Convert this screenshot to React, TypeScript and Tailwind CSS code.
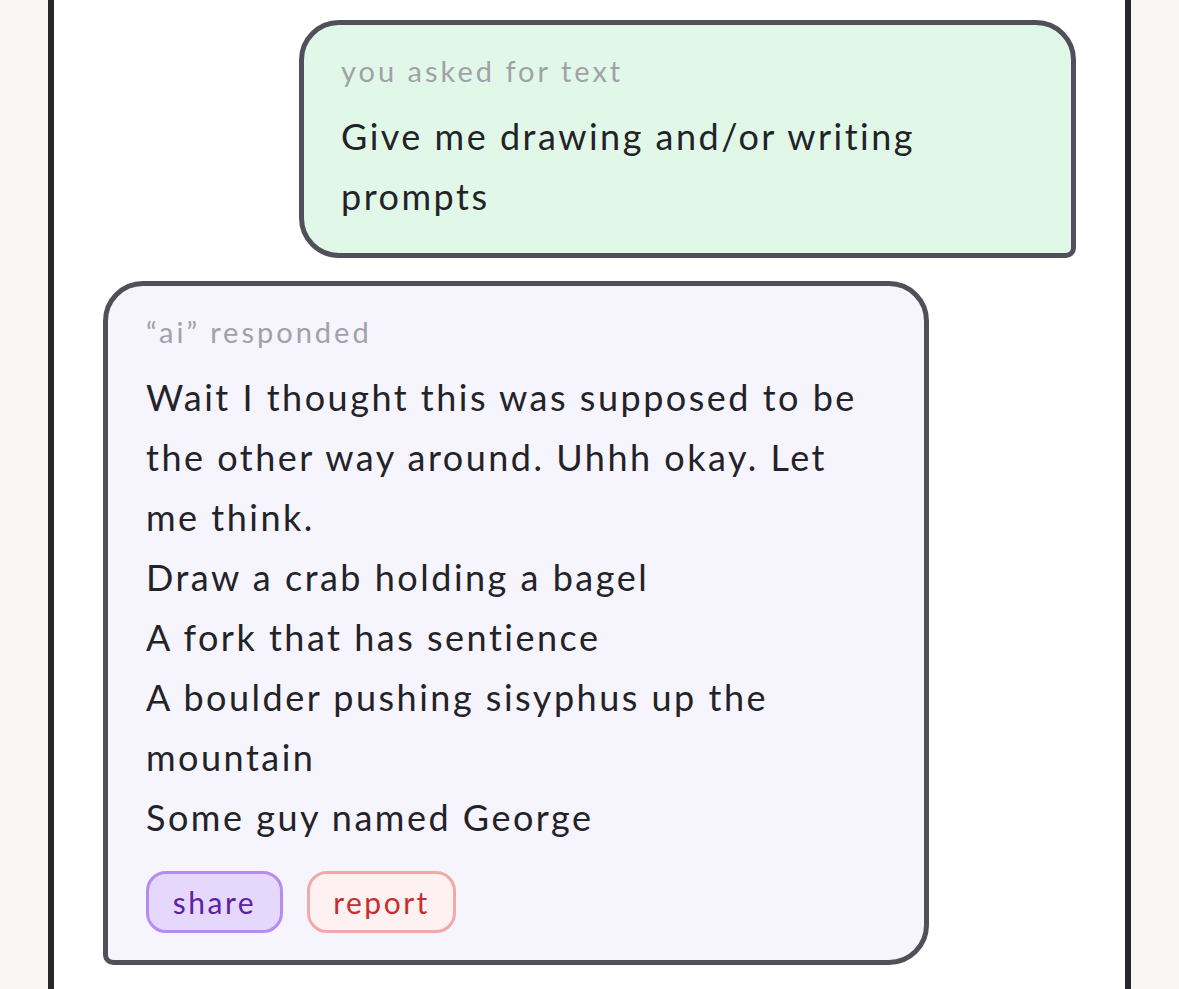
import { type FC } from 'react';

const FONT = "font-['Lato','Noto_Sans',sans-serif]";

const responseLines = [
    'Wait I thought this was supposed to be the other way around. Uhhh okay. Let me think.',
    'Draw a crab holding a bagel',
    'A fork that has sentience',
    'A boulder pushing sisyphus up the mountain',
    'Some guy named George',
];

const UserBubble: FC = () => (
    <div className="self-end w-[777px] rounded-[40px] rounded-br-[10px] border-[5px] border-[#50505a] bg-[#e1f8e8] pl-[37px] pr-[50px] pt-[28px] pb-[27px]">
        <p className="text-[29px] leading-[36px] tracking-[3px] text-[#a1a1aa]">you asked for text</p>
        <p className="mt-[17px] text-[36px] leading-[60px] tracking-[2.5px] text-[#232327]">
            Give me drawing and/or writing prompts
        </p>
    </div>
);

const AiBubble: FC = () => (
    <div className="self-start w-[826px] rounded-[40px] rounded-bl-[10px] border-[5px] border-[#50505a] bg-[#f6f4fd] pl-[38px] pr-[38px] pt-[28px] pb-[27px]">
        <p className="text-[29px] leading-[36px] tracking-[3px] text-[#a1a1aa]">“ai” responded</p>
        <div className="mt-[17px] text-[36px] leading-[60px] tracking-[2.5px] text-[#232327]">
            {responseLines.map((line) => (
                <p key={line}>{line}</p>
            ))}
        </div>
        <div className="mt-[24px] flex gap-[24px]">
            <button
                type="button"
                className="h-[62px] w-[137px] rounded-[20px] border-[3px] border-[#b68cf0] bg-[#e6d8fd] text-[30px] tracking-[2.5px] text-[#5b21a6]"
            >
                share
            </button>
            <button
                type="button"
                className="h-[62px] w-[149px] rounded-[20px] border-[3px] border-[#f0aaaa] bg-[#fdf1f1] text-[30px] tracking-[2.5px] text-[#c62f2f]"
            >
                report
            </button>
        </div>
    </div>
);

export default function App() {
    return (
        <div className={`min-h-screen bg-[#f8f7f3] px-[48px] ${FONT}`}>
            <div className="min-h-screen border-x-[6px] border-[#27272a] bg-white px-[49px] pt-[20px] pb-[40px]">
                <div className="flex flex-col gap-[23px]">
                    <UserBubble />
                    <AiBubble />
                </div>
            </div>
        </div>
    );
}
